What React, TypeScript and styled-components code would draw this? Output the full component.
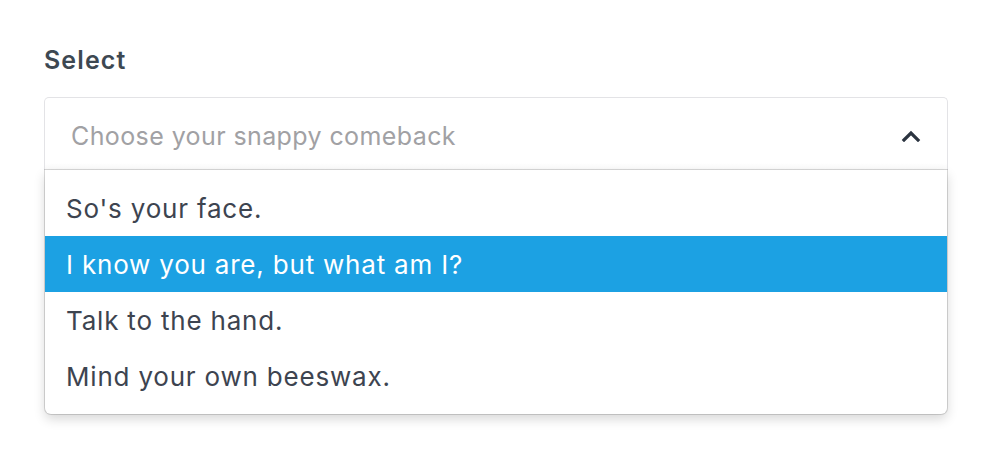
import React from "react";
import styled, { createGlobalStyle } from "styled-components";

const Global = createGlobalStyle`
  html, body { margin: 0; padding: 0; background: #ffffff; }
  body { font-family: Inter, "Open Sans", "Liberation Sans", sans-serif; }
`;

const Page = styled.div`
  padding: 44px 46px 0 44px;
  width: 994px;
  height: 470px;
  box-sizing: border-box;
`;

const Label = styled.div`
  font-size: 25px;
  font-weight: 600;
  letter-spacing: 1.1px;
  color: #3d4852;
  line-height: 32px;
  margin-bottom: 21px;
`;

const Field = styled.div`
  display: flex;
  flex-direction: column;
  width: 904px;
`;

const Control = styled.div`
  display: flex;
  align-items: center;
  justify-content: space-between;
  height: 73px;
  box-sizing: border-box;
  border: 1px solid #e3e3e6;
  border-bottom: none;
  border-radius: 5px 5px 0 0;
  padding: 3px 26px 0 26px;
  background: linear-gradient(to bottom, #ffffff 90%, #fafafa 100%);
`;

const Placeholder = styled.span`
  font-size: 25px;
  letter-spacing: 0.4px;
  color: #a1a1a4;
`;

const Menu = styled.ul`
  list-style: none;
  margin: 0 1px;
  padding: 10px 0;
  background: #ffffff;
  border-radius: 0 0 6px 6px;
  box-shadow: 0 0 0 1px rgba(0, 0, 0, 0.14), 0 5px 12px rgba(0, 0, 0, 0.16);
`;

const Option = styled.li<{ $active?: boolean }>`
  height: 56px;
  display: flex;
  align-items: center;
  padding: 0 21px;
  font-size: 26px;
  letter-spacing: 0.8px;
  color: ${(p) => (p.$active ? "#ffffff" : "#3d4450")};
  background: ${(p) => (p.$active ? "#1ca1e3" : "transparent")};
`;

const Chevron = () => (
  <svg width="20" height="12" viewBox="0 0 20 12" fill="none">
    <path d="M3 10 L10 3 L17 10" stroke="#2b3440" strokeWidth="3.2" strokeLinecap="square" strokeLinejoin="miter" />
  </svg>
);

const options = [
  "So's your face.",
  "I know you are, but what am I?",
  "Talk to the hand.",
  "Mind your own beeswax.",
];

export default function App() {
  return (
    <>
      <Global />
      <Page>
        <Label>Select</Label>
        <Field>
          <Control>
            <Placeholder>Choose your snappy comeback</Placeholder>
            <Chevron />
          </Control>
          <Menu>
            {options.map((o, i) => (
              <Option key={o} $active={i === 1}>
                {o}
              </Option>
            ))}
          </Menu>
        </Field>
      </Page>
    </>
  );
}
